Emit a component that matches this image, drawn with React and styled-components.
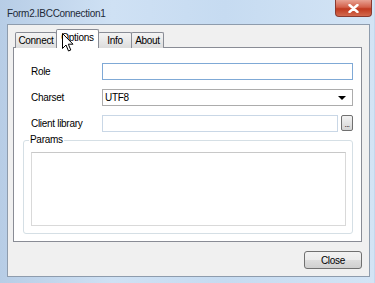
import React from "react";
import styled, { createGlobalStyle, css } from "styled-components";

const GlobalStyle = createGlobalStyle`
  html, body {
    margin: 0;
    padding: 0;
    background: #c4d8ee;
  }
  body {
    font-family: "Liberation Sans", Arial, sans-serif;
    font-size: 10px;
    letter-spacing: -0.3px;
    color: #000;
  }
`;

const Frame = styled.div`
  width: 375px;
  height: 283px;
  box-sizing: border-box;
  padding: 0 4px 6px 7px;
  display: flex;
  flex-direction: column;
  background: linear-gradient(90deg, #b7cde6 0%, #cfe1f4 30%, #c6dbf1 60%, #d3e4f5 100%);
  border-left: 1px solid #6f8197;
  margin-left: -1px;
  overflow: hidden;
`;

const TitleBar = styled.div`
  height: 24px;
  display: flex;
  align-items: flex-start;
  justify-content: space-between;
`;

const Title = styled.div`
  padding-top: 8px;
  font-size: 10px;
  color: #1e2a38;
`;

const CloseX = styled.button`
  width: 37px;
  height: 17px;
  margin-right: -2px;
  padding: 0;
  border: 1px solid #8a3a30;
  border-top: none;
  border-radius: 0 0 4px 4px;
  background: linear-gradient(180deg, #e8a293 0%, #d3604a 45%, #c0391f 55%, #d26a4f 100%);
  display: flex;
  align-items: center;
  justify-content: center;
`;

const Client = styled.div`
  flex: 1;
  box-sizing: border-box;
  border: 1px solid #8e9cad;
  background: #f0f0f0;
  padding: 5px 7px 6px 5px;
  display: flex;
  flex-direction: column;
  position: relative;
`;

const TabRow = styled.div`
  display: flex;
  align-items: flex-end;
  padding-left: 2px;
  height: 18px;
  margin-bottom: -1px;
  position: relative;
  z-index: 1;
`;

const Tab = styled.div`
  width: ${({ $w }) => $w}px;
  box-sizing: border-box;
  border: 1px solid #898c95;
  border-bottom: none;
  margin-left: -1px;
  display: flex;
  align-items: center;
  justify-content: center;
  height: 16px;
  background: linear-gradient(180deg, #f4f4f4 0%, #e9e9e9 50%, #dcdcdc 100%);
  border-radius: 2px 2px 0 0;
  font-size: 10px;
  ${({ $active }) =>
    $active &&
    css`
      height: 19px;
      background: #fff;
      padding-bottom: 3px;
      z-index: 2;
    `}
`;

const Panel = styled.div`
  height: 195px;
  box-sizing: border-box;
  background: #fff;
  border: 1px solid #898c95;
  padding: 15px 8px 7px 9px;
  display: flex;
  flex-direction: column;
  gap: 9px;
`;

const Row = styled.div`
  display: grid;
  grid-template-columns: 71px 1fr;
  align-items: center;
  height: 17px;
  padding-left: 8px;
`;

const Label = styled.span`
  font-size: 10px;
`;

const Field = styled.div`
  height: 17px;
  box-sizing: border-box;
  border: 1px solid ${({ $border }) => $border};
  background: #fff;
  display: flex;
  align-items: center;
  padding-left: 2px;
  font-size: 10px;
  position: relative;
`;

const Arrow = styled.span`
  position: absolute;
  right: 6px;
  top: 6px;
  width: 0;
  height: 0;
  border-left: 4px solid transparent;
  border-right: 4px solid transparent;
  border-top: 4px solid #000;
`;

const FieldWithButton = styled.div`
  display: flex;
  gap: 3px;
`;

const Ellipsis = styled.div`
  width: 12px;
  height: 16px;
  box-sizing: border-box;
  border: 1px solid #707070;
  border-radius: 2px;
  background: linear-gradient(180deg, #f2f2f2 0%, #e4e4e4 50%, #d4d4d4 100%);
  display: flex;
  align-items: flex-end;
  justify-content: center;
  font-size: 8px;
  line-height: 10px;
  letter-spacing: -0.5px;
`;

const Group = styled.div`
  margin-top: -1px;
  height: 94px;
  box-sizing: border-box;
  border: 1px solid #d5dfe5;
  border-radius: 3px;
  padding: 11px 6px 7px 7px;
  position: relative;
  display: flex;
`;

const Legend = styled.span`
  position: absolute;
  top: -7px;
  left: 5px;
  padding: 0 1px;
  background: #fff;
  font-size: 10px;
  line-height: 12px;
`;

const Memo = styled.div`
  flex: 1;
  border: 1px solid #d9d9d9;
  border-top-color: #c8c8c8;
  background: #fff;
`;

const Footer = styled.div`
  display: flex;
  justify-content: flex-end;
  margin-top: 9px;
`;

const Button = styled.button`
  width: 58px;
  height: 18px;
  box-sizing: border-box;
  border: 1px solid #707070;
  border-radius: 3px;
  background: linear-gradient(180deg, #f2f2f2 0%, #ebebeb 50%, #dddddd 51%, #cfcfcf 100%);
  font-family: "Liberation Sans", Arial, sans-serif;
  font-size: 10px;
  letter-spacing: -0.3px;
  padding: 0;
  color: #000;
`;

const Cursor = styled.svg`
  position: absolute;
  left: 54px;
  top: 8px;
  z-index: 10;
`;

export default function App() {
  return (
    <>
      <GlobalStyle />
      <Frame>
        <TitleBar>
          <Title>Form2.IBCConnection1</Title>
          <CloseX aria-label="close">
            <svg width="11" height="9" viewBox="0 0 11 9">
              <path
                d="M1.5 1 L9.5 8 M9.5 1 L1.5 8"
                stroke="#fff"
                strokeWidth="2.4"
                strokeLinecap="round"
              />
            </svg>
          </CloseX>
        </TitleBar>
        <Client>
          <TabRow>
            <Tab $w={42} style={{ marginLeft: 0 }}>Connect</Tab>
            <Tab $w={43} $active>Options</Tab>
            <Tab $w={34}>Info</Tab>
            <Tab $w={33}>About</Tab>
          </TabRow>
          <Panel>
            <Row>
              <Label>Role</Label>
              <Field $border="#7fa9d6" />
            </Row>
            <Row>
              <Label>Charset</Label>
              <Field $border="#acacac">
                UTF8
                <Arrow />
              </Field>
            </Row>
            <Row>
              <Label>Client library</Label>
              <FieldWithButton>
                <Field $border="#c9d7e6" style={{ flex: 1 }} />
                <Ellipsis>...</Ellipsis>
              </FieldWithButton>
            </Row>
            <Group>
              <Legend>Params</Legend>
              <Memo />
            </Group>
          </Panel>
          <Footer>
            <Button>Close</Button>
          </Footer>
          <Cursor width="12" height="19" viewBox="0 0 12 19">
            <path
              d="M0.5 0.5 L0.5 15.5 L4 12 L6.5 18 L8.8 17 L6.3 11.2 L11 11.2 Z"
              fill="#fff"
              stroke="#000"
              strokeWidth="1"
              strokeLinejoin="miter"
            />
          </Cursor>
        </Client>
      </Frame>
    </>
  );
}
